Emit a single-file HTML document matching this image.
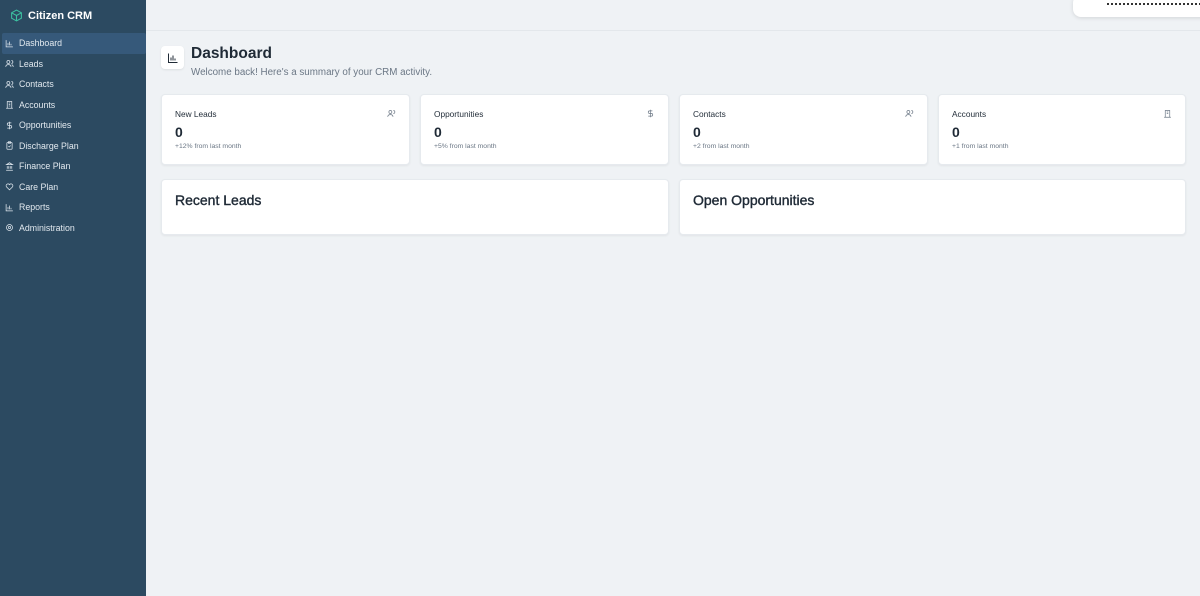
<!DOCTYPE html><html><head><style>
*{box-sizing:border-box;margin:0;padding:0}
body{width:1200px;height:596px;overflow:hidden;background:#eff2f5;font-family:"Liberation Sans",sans-serif;position:relative}
.sb{position:absolute;left:0;top:0;width:146px;height:596px;background:#2c4a61;color:#e8eef3}
.logo{position:absolute;left:10px;top:9px;display:flex;align-items:center;gap:5px;font-size:11px;font-weight:bold;color:#fff}
.nav{position:absolute;top:33px;left:2px;width:144px}
.it{height:20.5px;display:flex;align-items:center;gap:5px;padding-left:3px;font-size:8.8px;color:#e2e9ef}
.it.a{background:#36597a;border-radius:2px}
.it svg{width:9px;height:9px;stroke:#dfe7ee;fill:none;stroke-width:2}
.hdr{position:absolute;left:146px;top:0;right:0;height:31px;border-bottom:1px solid #e3e7eb}
.pop{position:absolute;left:1073px;top:-5px;width:140px;height:22px;background:#fff;border-radius:8px;box-shadow:0 1px 4px rgba(0,0,0,.12)}
.dots{position:absolute;left:34px;top:8px;width:94px;border-top:2px dotted #333}
.ti{position:absolute;left:161px;top:46px;width:23px;height:23px;background:#fff;border-radius:4px;box-shadow:0 1px 2px rgba(0,0,0,.08);display:flex;align-items:center;justify-content:center}
h1{position:absolute;left:191px;top:45px;font-size:15.5px;font-weight:bold;color:#1f2a36}
.sub{position:absolute;left:191px;top:67px;font-size:9.8px;color:#6b7785}
.c{position:absolute;background:#fff;border-radius:4px;box-shadow:0 1px 2px rgba(0,0,0,.06);border:1px solid #e6eaee}
.c .l{position:absolute;left:13px;top:14px;font-size:8.3px;color:#1f2a36}
.c .v{position:absolute;left:13px;top:29px;font-size:14px;font-weight:bold;color:#1f2a36}
.c .s{position:absolute;left:13px;top:48px;font-size:6.8px;color:#6b7785}
.c svg{position:absolute;right:13px;top:14px;width:9px;height:9px;stroke:#6b7785;fill:none;stroke-width:1.8}
.c h2{position:absolute;left:13px;top:12px;font-size:14px;font-weight:normal;-webkit-text-stroke:.4px #1f2a36;color:#1f2a36}
</style></head><body>
<div class="sb">
<div class="logo"><svg width="13" height="13" viewBox="0 0 24 24" fill="none" stroke="#3cc0a0" stroke-width="2"><path d="M12 2l9 5v10l-9 5-9-5V7z"/><path d="M3 7l9 5 9-5M12 12v10"/></svg>Citizen CRM</div>
<div class="nav">
<div class="it a"><svg viewBox="0 0 24 24"><path d="M3 3v18h18M8 17v-6M12 17V7M16 17v-4"/></svg>Dashboard</div>
<div class="it"><svg viewBox="0 0 24 24"><circle cx="9" cy="8" r="4"/><path d="M2 21c0-4 3-6 7-6s7 2 7 6M17 4a4 4 0 010 8M22 21c0-3-2-5-4-6"/></svg>Leads</div>
<div class="it"><svg viewBox="0 0 24 24"><circle cx="9" cy="8" r="4"/><path d="M2 21c0-4 3-6 7-6s7 2 7 6M17 4a4 4 0 010 8M22 21c0-3-2-5-4-6"/></svg>Contacts</div>
<div class="it"><svg viewBox="0 0 24 24"><path d="M6 22V4h12v18M3 22h18M10 8h4M10 12h4M10 16h4"/></svg>Accounts</div>
<div class="it"><svg viewBox="0 0 24 24"><path d="M12 2v20M17 5H9.5a3.5 3.5 0 000 7h5a3.5 3.5 0 010 7H6"/></svg>Opportunities</div>
<div class="it"><svg viewBox="0 0 24 24"><rect x="5" y="4" width="14" height="18" rx="2"/><path d="M9 2h6v4H9zM9 14l2 2 4-4"/></svg>Discharge Plan</div>
<div class="it"><svg viewBox="0 0 24 24"><path d="M3 22h18M6 18v-7M10 18v-7M14 18v-7M18 18v-7M12 2l8 5H4z"/></svg>Finance Plan</div>
<div class="it"><svg viewBox="0 0 24 24"><path d="M12 21l-8-8a5 5 0 018-6 5 5 0 018 6z"/></svg>Care Plan</div>
<div class="it"><svg viewBox="0 0 24 24"><path d="M3 3v18h18M8 17v-6M12 17V7M16 17v-4"/></svg>Reports</div>
<div class="it"><svg viewBox="0 0 24 24"><circle cx="12" cy="12" r="3"/><circle cx="12" cy="12" r="8"/></svg>Administration</div>
</div></div>
<div class="hdr"></div>
<div class="pop"><div class="dots"></div></div>
<div class="ti"><svg width="12" height="12" viewBox="0 0 24 24" fill="none" stroke="#1f2a36" stroke-width="2"><path d="M3 3v18h18M8 17v-6M12 17V7M16 17v-4"/></svg></div>
<h1>Dashboard</h1>
<div class="sub">Welcome back! Here's a summary of your CRM activity.</div>
<div class="c" style="left:161px;top:94px;width:249px;height:71px"><div class="l">New Leads</div><svg viewBox="0 0 24 24"><circle cx="9" cy="8" r="4"/><path d="M2 21c0-4 3-6 7-6s7 2 7 6M17 4a4 4 0 010 8"/></svg><div class="v">0</div><div class="s">+12% from last month</div></div>
<div class="c" style="left:420px;top:94px;width:249px;height:71px"><div class="l">Opportunities</div><svg viewBox="0 0 24 24"><path d="M12 2v20M17 5H9.5a3.5 3.5 0 000 7h5a3.5 3.5 0 010 7H6"/></svg><div class="v">0</div><div class="s">+5% from last month</div></div>
<div class="c" style="left:679px;top:94px;width:249px;height:71px"><div class="l">Contacts</div><svg viewBox="0 0 24 24"><circle cx="9" cy="8" r="4"/><path d="M2 21c0-4 3-6 7-6s7 2 7 6M17 4a4 4 0 010 8"/></svg><div class="v">0</div><div class="s">+2 from last month</div></div>
<div class="c" style="left:938px;top:94px;width:248px;height:71px"><div class="l">Accounts</div><svg viewBox="0 0 24 24"><path d="M6 22V4h12v18M3 22h18M10 8h4M10 12h4"/></svg><div class="v">0</div><div class="s">+1 from last month</div></div>
<div class="c" style="left:161px;top:179px;width:508px;height:56px"><h2>Recent Leads</h2></div>
<div class="c" style="left:679px;top:179px;width:507px;height:56px"><h2>Open Opportunities</h2></div>
</body></html>
